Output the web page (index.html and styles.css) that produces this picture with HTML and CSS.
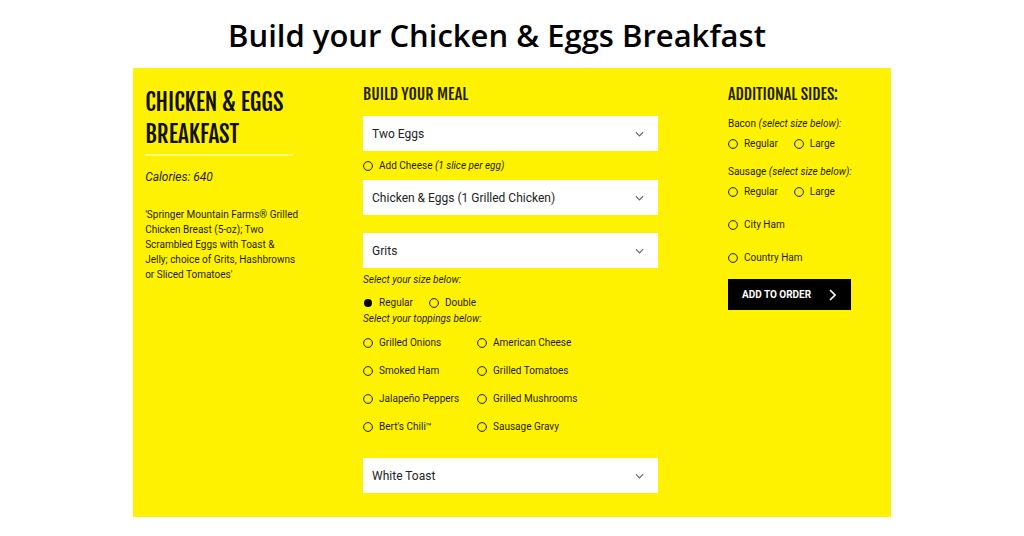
FILE: index.html
```html
<!DOCTYPE html>
<html lang="en">
<head>
<meta charset="utf-8">
<meta name="viewport" content="width=device-width, initial-scale=1">
<title>Build your Chicken &amp; Eggs Breakfast</title>
<link rel="stylesheet" href="styles.css">
</head>
<body>
<h1 class="page-title">Build your Chicken &amp; Eggs Breakfast</h1>
<main class="panel">
  <section class="summary">
    <h2 class="meal-name">Chicken &amp; Eggs Breakfast</h2>
    <p class="calories">Calories: 640</p>
    <p class="description">'Springer Mountain Farms® Grilled<br>Chicken Breast (5-oz); Two<br>Scrambled Eggs with Toast &amp;<br>Jelly; choice of Grits, Hashbrowns<br>or Sliced Tomatoes'</p>
  </section>

  <section class="meal">
    <h3 class="heading">Build your meal</h3>
    <div class="picker">
      <select aria-label="Eggs"><option>Two Eggs</option></select>
      <svg class="chevron" viewBox="0 0 10 6" aria-hidden="true"><path d="M1 1l4 4 4-4"/></svg>
    </div>
    <label class="choice cheese"><input type="checkbox"><span>Add Cheese <em>(1 slice per egg)</em></span></label>
    <div class="picker spaced">
      <select aria-label="Chicken"><option>Chicken &amp; Eggs (1 Grilled Chicken)</option></select>
      <svg class="chevron" viewBox="0 0 10 6" aria-hidden="true"><path d="M1 1l4 4 4-4"/></svg>
    </div>
    <div class="picker">
      <select aria-label="Side"><option>Grits</option></select>
      <svg class="chevron" viewBox="0 0 10 6" aria-hidden="true"><path d="M1 1l4 4 4-4"/></svg>
    </div>
    <p class="hint size-hint">Select your size below:</p>
    <div class="sizes">
      <label class="choice"><input type="radio" name="size" checked><span>Regular</span></label>
      <label class="choice"><input type="radio" name="size"><span>Double</span></label>
    </div>
    <p class="hint">Select your toppings below:</p>
    <div class="toppings">
      <label class="choice"><input type="checkbox"><span>Grilled Onions</span></label>
      <label class="choice"><input type="checkbox"><span>American Cheese</span></label>
      <label class="choice"><input type="checkbox"><span>Smoked Ham</span></label>
      <label class="choice"><input type="checkbox"><span>Grilled Tomatoes</span></label>
      <label class="choice"><input type="checkbox"><span>Jalapeño Peppers</span></label>
      <label class="choice"><input type="checkbox"><span>Grilled Mushrooms</span></label>
      <label class="choice"><input type="checkbox"><span>Bert's Chili™</span></label>
      <label class="choice"><input type="checkbox"><span>Sausage Gravy</span></label>
    </div>
    <div class="picker">
      <select aria-label="Bread"><option>White Toast</option></select>
      <svg class="chevron" viewBox="0 0 10 6" aria-hidden="true"><path d="M1 1l4 4 4-4"/></svg>
    </div>
  </section>

  <section class="sides">
    <h3 class="heading">Additional sides:</h3>
    <p class="side-name">Bacon <em>(select size below):</em></p>
    <div class="sizes">
      <label class="choice"><input type="radio" name="bacon"><span>Regular</span></label>
      <label class="choice"><input type="radio" name="bacon"><span>Large</span></label>
    </div>
    <p class="side-name">Sausage <em>(select size below):</em></p>
    <div class="sizes">
      <label class="choice"><input type="radio" name="sausage"><span>Regular</span></label>
      <label class="choice"><input type="radio" name="sausage"><span>Large</span></label>
    </div>
    <label class="choice ham"><input type="checkbox"><span>City Ham</span></label>
    <label class="choice ham"><input type="checkbox"><span>Country Ham</span></label>
    <button class="order" type="button">ADD TO ORDER
      <svg viewBox="0 0 7 12" aria-hidden="true"><path d="M1 1l5 5-5 5"/></svg>
    </button>
  </section>
</main>
</body>
</html>
```
FILE: styles.css
```css
* { box-sizing: border-box; }
body {
  margin: 0;
  background: #fff;
  color: #1f1e00;
  font: 400 10px/16px Roboto, "Liberation Sans", sans-serif;
}
h1, h2, h3, p { margin: 0; }

.page-title {
  padding: 13px 30px 11px 0;
  color: #000;
  font: 600 31px/44px "Open Sans", "Noto Sans", sans-serif;
  text-align: center;
}
.panel {
  display: grid;
  grid-template-columns: minmax(0, 148fr) minmax(0, 295fr) minmax(0, 151fr);
  column-gap: 70px;
  width: 74%;
  margin: 0 auto;
  padding: 16px 12px 24px;
  background: #fff200;
}

.meal-name, .heading {
  font-family: "Fjalla One", "Roboto Condensed", "Liberation Sans Narrow", sans-serif;
  font-weight: 400;
  text-transform: uppercase;
}
.meal-name {
  padding: 3px 0 3px;
  border-bottom: 2px solid #fff880;
  color: #111000;
  font-size: 23px;
  line-height: 32px;
}
.heading {
  margin-bottom: 12px;
  font-size: 16px;
  line-height: 20px;
}
.calories {
  margin: 13px 0 22px;
  font-size: 12px;
  font-style: italic;
}
.description {
  line-height: 15px;
  white-space: nowrap;
}

.picker {
  display: grid;
  align-items: center;
}
.picker > * { grid-area: 1 / 1; }
.picker select {
  width: 100%;
  height: 35px;
  padding: 0 9px;
  border: 0;
  border-radius: 0;
  appearance: none;
  background: #fff;
  color: #222;
  font: 400 12px/16px Roboto, "Liberation Sans", sans-serif;
}
.spaced { margin-bottom: 18px; }
.chevron {
  justify-self: end;
  width: 9px;
  height: 6px;
  margin-right: 14px;
  fill: none;
  stroke: #666;
  stroke-width: 1.3;
  pointer-events: none;
}

.choice {
  display: flex;
  align-items: center;
  gap: 6px;
}
.choice input {
  flex: none;
  width: 10px;
  height: 10px;
  margin: 0;
  border: 1px solid #3a3700;
  border-radius: 50%;
  appearance: none;
  box-shadow: inset 0 0 1px #3a3700;
}
.choice input:checked {
  border: 1px solid transparent;
  background: #000 padding-box;
  box-shadow: none;
}
.cheese { padding: 7px 0 6px; }
.size-hint { margin: 4px 0 7px; }
.hint { font-style: italic; }
.sizes {
  display: flex;
  gap: 16px;
}
.meal .hint + .toppings { margin: 8px 0 23px; }
.toppings {
  display: grid;
  grid-template-columns: 98px 1fr;
  gap: 12px 16px;
}
.side-name { margin-bottom: 4px; }
.sides .sizes { margin-bottom: 12px; }
.ham { margin-top: 17px; }
.order {
  display: flex;
  align-items: center;
  gap: 18px;
  margin-top: 13px;
  padding: 8px 15px 7px 14px;
  border: 0;
  background: #000;
  color: #fff;
  font: 700 10px/16px Roboto, "Liberation Sans", sans-serif;
}
.order svg {
  width: 7px;
  height: 12px;
  fill: none;
  stroke: #fff;
  stroke-width: 1.6;
}
```
